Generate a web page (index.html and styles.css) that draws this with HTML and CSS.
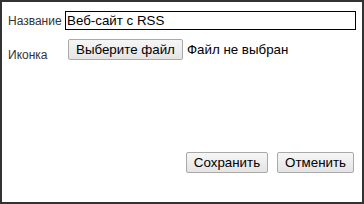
FILE: index.html
```html
<!DOCTYPE html>
<html>
<head>
<meta charset="utf-8">
<link rel="stylesheet" href="styles.css">
</head>
<body>
<div class="frame">
  <div class="form">
    <label class="label label-name" for="name">Название</label>
    <input class="text-input" id="name" type="text" value="Веб-сайт с RSS">
    <span class="label label-icon">Иконка</span>
    <div class="file">
      <button class="btn" type="button">Выберите файл</button>
      <span class="file-status">Файл не выбран</span>
    </div>
  </div>
  <div class="actions">
    <button class="btn btn-action" type="button">Сохранить</button>
    <button class="btn btn-action" type="button">Отменить</button>
  </div>
</div>
</body>
</html>
```
FILE: styles.css
```css
html, body {
  margin: 0;
  padding: 0;
  background: #ffffff;
}
.frame {
  box-sizing: border-box;
  width: 364px;
  height: 204px;
  border: 2px solid #333333;
  background: #ffffff;
  display: flex;
  flex-direction: column;
  padding: 9px 6px 29px 6px;
  font-family: "Liberation Sans", Arial, sans-serif;
  color: #222222;
}
.form {
  display: grid;
  grid-template-columns: 57px 1fr;
  row-gap: 9px;
}
.label {
  font-size: 12px;
  color: #333333;
}
.label-name {
  align-self: center;
}
.label-icon {
  align-self: end;
  line-height: 14px;
  margin-bottom: -2px;
}
.text-input {
  box-sizing: border-box;
  height: 19px;
  width: 100%;
  margin: 0;
  border: 1px solid #000000;
  padding: 0 1px;
  font-family: "Liberation Sans", Arial, sans-serif;
  font-size: 13.333px;
  color: #000000;
  background: #ffffff;
  outline: none;
}
.file {
  display: flex;
  align-items: center;
  gap: 4px;
  padding-left: 3px;
}
.file-status {
  font-size: 13.333px;
  color: #000000;
}
.btn {
  box-sizing: border-box;
  height: 21px;
  margin: 0;
  padding: 0 7px;
  border: 1px solid #a9a9a9;
  border-radius: 2px;
  background: linear-gradient(#f6f6f6, #e4e4e4);
  font-family: "Liberation Sans", Arial, sans-serif;
  font-size: 13.333px;
  color: #000000;
}
.actions {
  margin-top: auto;
  display: flex;
  justify-content: flex-end;
  gap: 9px;
  padding-right: 2px;
}
```
